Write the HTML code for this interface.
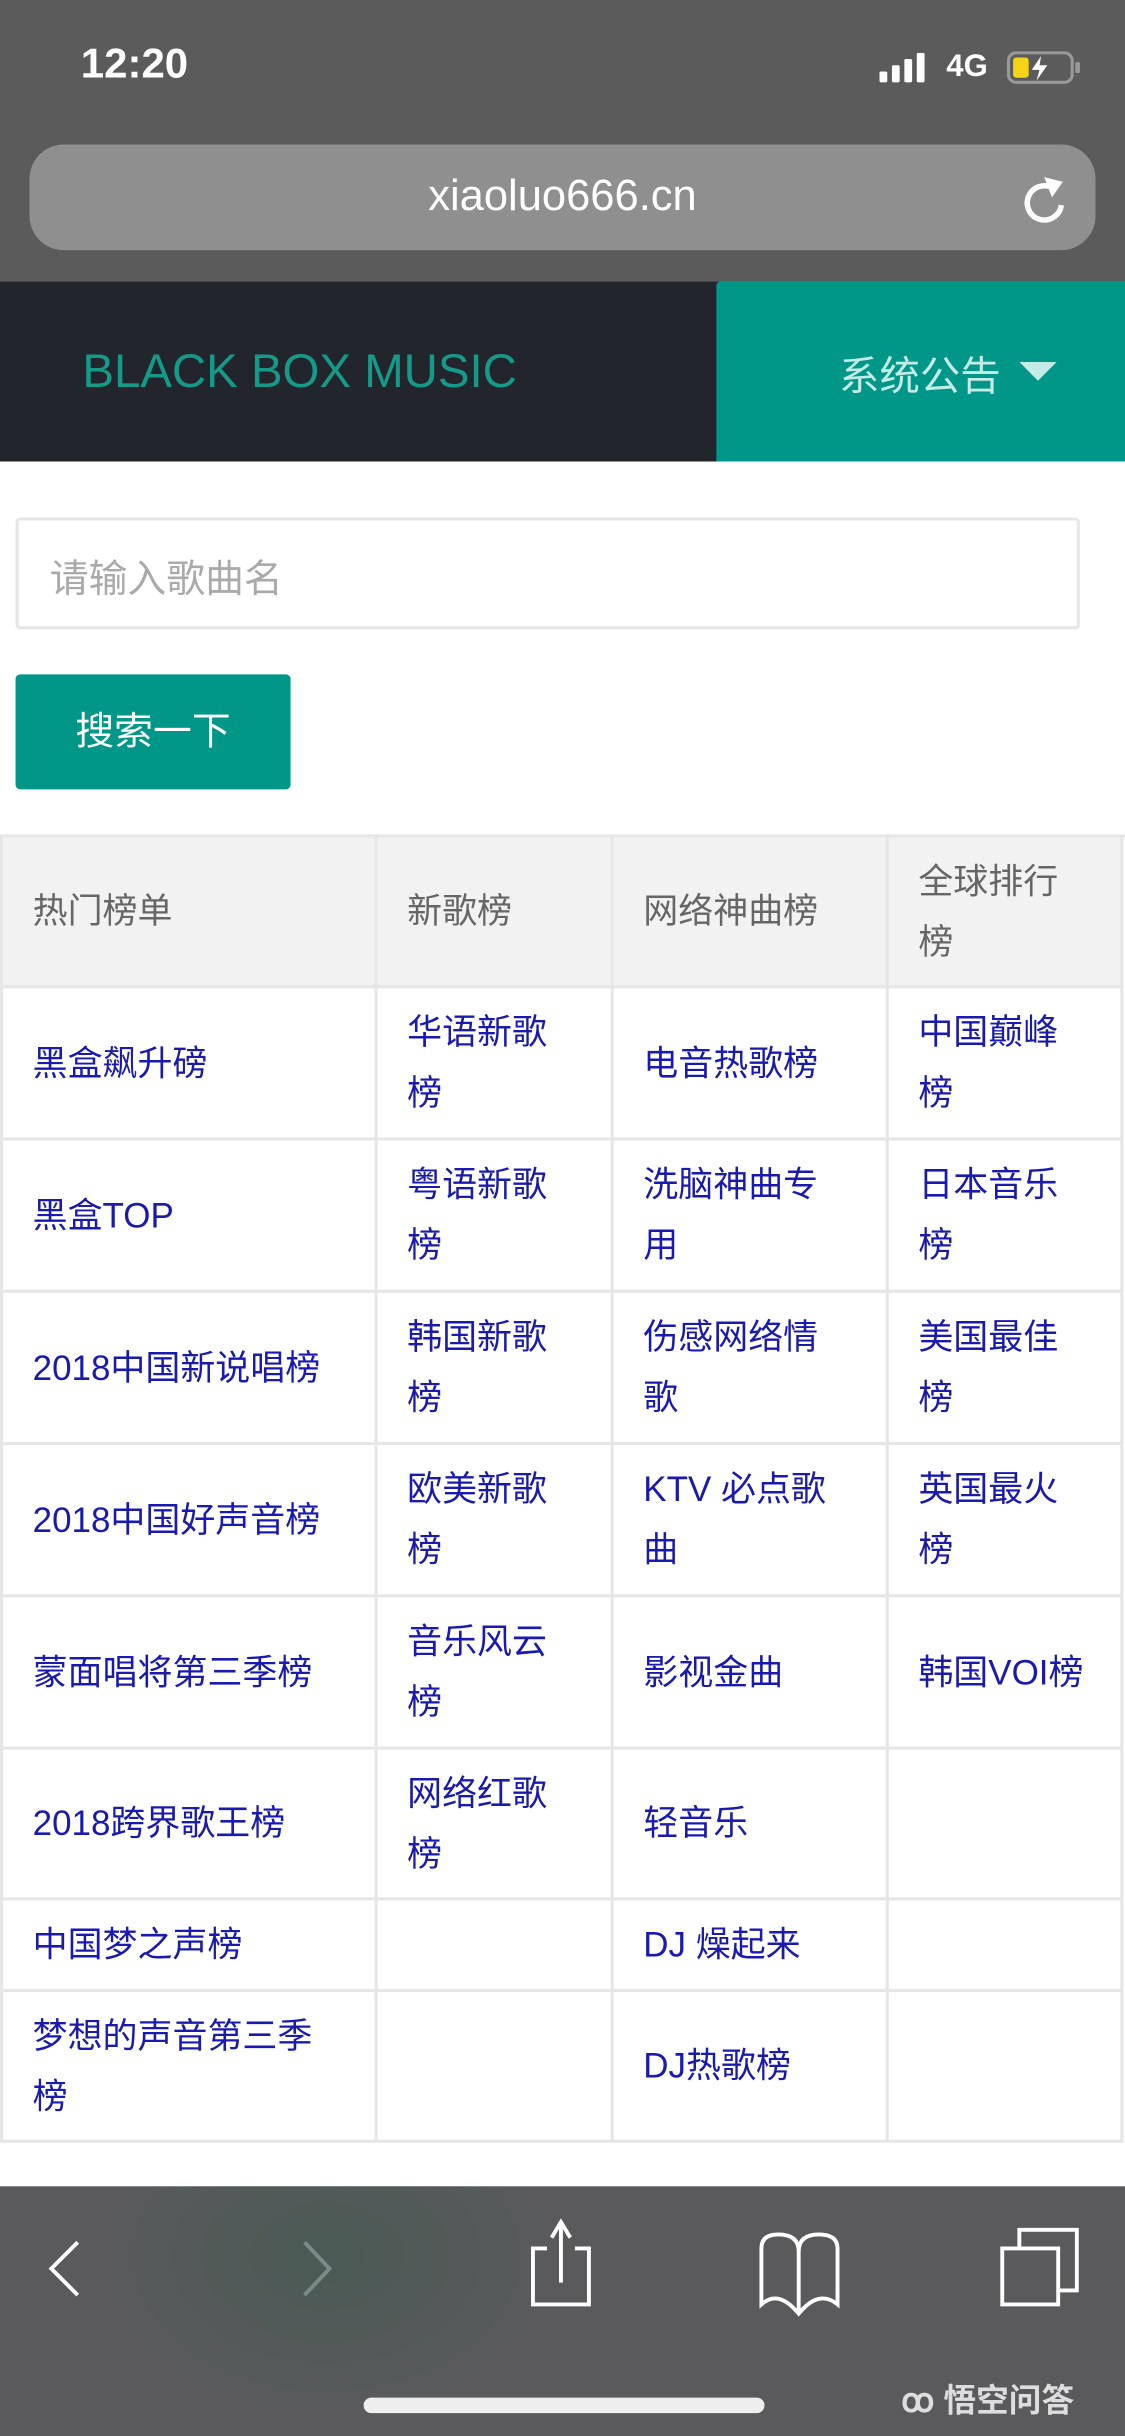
<!DOCTYPE html>
<html><head><meta charset="utf-8"><style>
*{margin:0;padding:0;box-sizing:border-box}
html,body{width:1125px;height:2436px;overflow:hidden;background:#fff}
#w{position:absolute;left:0;top:0;width:724px;height:1568px;transform:scale(1.55387);transform-origin:0 0;font-family:"Liberation Sans","Noto Sans CJK SC",sans-serif}
.a{position:absolute}
.c{position:absolute;display:flex;align-items:center;padding-left:19px;font-size:22.5px;line-height:39px;color:#1a1aae;white-space:nowrap;border-right:2px solid #e6e6e6;border-bottom:2px solid #e6e6e6}
.h{background:#f2f2f2;color:#666}
</style></head><body><div id="w">
<div class="a" style="left:0;top:0;width:724px;height:181px;background:#5b5b5b"></div>
<div class="a" style="left:52px;top:26px;color:#fff;font-size:27px;font-weight:bold;">12:20</div>
<svg class="a" style="left:566px;top:34px" width="36" height="20"><rect x="0" y="12" width="5" height="7" rx="1" fill="#fff"/><rect x="8" y="8" width="5" height="11" rx="1" fill="#fff"/><rect x="16" y="4" width="5" height="15" rx="1" fill="#fff"/><rect x="24" y="0" width="5" height="19" rx="1" fill="#fff"/></svg>
<div class="a" style="left:609px;top:32px;color:#fff;font-size:20px;font-weight:bold">4G</div>
<svg class="a" style="left:648px;top:33px" width="48" height="22"><rect x="1" y="1" width="41" height="19" rx="5" fill="none" stroke="#999" stroke-width="2"/><rect x="4" y="4" width="10" height="13" rx="2" fill="#f5d415"/><rect x="44" y="7" width="3" height="7" rx="1" fill="#999"/><path d="M22 3 L16 12 H21 L19 19 L26 9 H21 Z" fill="#fff"/></svg>
<div class="a" style="left:19px;top:93px;width:686px;height:68px;background:#8f8f8f;border-radius:22px"></div>
<div class="a" style="left:0;top:110px;width:724px;text-align:center;color:#fff;font-size:28px">xiaoluo666.cn</div>
<svg class="a" style="left:655px;top:108px" width="36" height="40"><path d="M24 14 A11 11 0 1 0 28 24" fill="none" stroke="#fff" stroke-width="3.5"/><path d="M17 6 L29 9 L22 19 Z" fill="#fff"/></svg>
<div class="a" style="left:0;top:181px;width:724px;height:116px;background:#23252c"></div>
<div class="a" style="left:461px;top:181px;width:263px;height:116px;background:#009688;border-radius:3px 0 0 0"></div>
<div class="a" style="left:53px;top:222px;color:#159a8a;font-size:30.5px">BLACK BOX MUSIC</div>
<div class="a" style="left:540px;top:222px;color:#c4ece7;font-size:26px">系统公告</div>
<svg class="a" style="left:656px;top:233px" width="24" height="14"><path d="M0 0 H24 L12 12 Z" fill="#c4ece7"/></svg>
<div class="a" style="left:10px;top:333px;width:685px;height:72px;border:2px solid #e6e6e6;border-radius:3px"></div>
<div class="a" style="left:32px;top:353px;color:#aaa;font-size:25px">请输入歌曲名</div>
<div class="a" style="left:10px;top:434px;width:177px;height:74px;background:#009688;border-radius:3px;color:#fff;font-size:25px;text-align:center;line-height:74px">搜索一下</div>
<div class="a" style="left:0;top:537px;width:724px;height:2px;background:#e6e6e6"></div>
<div class="a" style="left:0;top:537px;width:2px;height:842px;background:#e6e6e6"></div>

<div class="c h" style="left:2px;top:539px;width:241px;height:97px">热门榜单</div>
<div class="c h" style="left:243px;top:539px;width:152px;height:97px">新歌榜</div>
<div class="c h" style="left:395px;top:539px;width:177px;height:97px">网络神曲榜</div>
<div class="c h" style="left:572px;top:539px;width:151px;height:97px">全球排行<br>榜</div>

<div class="c" style="left:2px;top:636px;width:241px;height:98px">黑盒飙升磅</div>
<div class="c" style="left:243px;top:636px;width:152px;height:98px">华语新歌<br>榜</div>
<div class="c" style="left:395px;top:636px;width:177px;height:98px">电音热歌榜</div>
<div class="c" style="left:572px;top:636px;width:151px;height:98px">中国巅峰<br>榜</div>

<div class="c" style="left:2px;top:734px;width:241px;height:98px">黑盒TOP</div>
<div class="c" style="left:243px;top:734px;width:152px;height:98px">粤语新歌<br>榜</div>
<div class="c" style="left:395px;top:734px;width:177px;height:98px">洗脑神曲专<br>用</div>
<div class="c" style="left:572px;top:734px;width:151px;height:98px">日本音乐<br>榜</div>

<div class="c" style="left:2px;top:832px;width:241px;height:98px">2018中国新说唱榜</div>
<div class="c" style="left:243px;top:832px;width:152px;height:98px">韩国新歌<br>榜</div>
<div class="c" style="left:395px;top:832px;width:177px;height:98px">伤感网络情<br>歌</div>
<div class="c" style="left:572px;top:832px;width:151px;height:98px">美国最佳<br>榜</div>

<div class="c" style="left:2px;top:930px;width:241px;height:98px">2018中国好声音榜</div>
<div class="c" style="left:243px;top:930px;width:152px;height:98px">欧美新歌<br>榜</div>
<div class="c" style="left:395px;top:930px;width:177px;height:98px">KTV 必点歌<br>曲</div>
<div class="c" style="left:572px;top:930px;width:151px;height:98px">英国最火<br>榜</div>

<div class="c" style="left:2px;top:1028px;width:241px;height:98px">蒙面唱将第三季榜</div>
<div class="c" style="left:243px;top:1028px;width:152px;height:98px">音乐风云<br>榜</div>
<div class="c" style="left:395px;top:1028px;width:177px;height:98px">影视金曲</div>
<div class="c" style="left:572px;top:1028px;width:151px;height:98px">韩国VOI榜</div>

<div class="c" style="left:2px;top:1126px;width:241px;height:97px">2018跨界歌王榜</div>
<div class="c" style="left:243px;top:1126px;width:152px;height:97px">网络红歌<br>榜</div>
<div class="c" style="left:395px;top:1126px;width:177px;height:97px">轻音乐</div>
<div class="c" style="left:572px;top:1126px;width:151px;height:97px"></div>

<div class="c" style="left:2px;top:1223px;width:241px;height:59px">中国梦之声榜</div>
<div class="c" style="left:243px;top:1223px;width:152px;height:59px"></div>
<div class="c" style="left:395px;top:1223px;width:177px;height:59px">DJ 燥起来</div>
<div class="c" style="left:572px;top:1223px;width:151px;height:59px"></div>

<div class="c" style="left:2px;top:1282px;width:241px;height:97px">梦想的声音第三季<br>榜</div>
<div class="c" style="left:243px;top:1282px;width:152px;height:97px"></div>
<div class="c" style="left:395px;top:1282px;width:177px;height:97px">DJ热歌榜</div>
<div class="c" style="left:572px;top:1282px;width:151px;height:97px"></div>

<div class="a" style="left:0;top:1407px;width:724px;height:161px;background:#5a5a5c"></div>
<div class="a" style="left:60px;top:1407px;width:300px;height:150px;background:radial-gradient(ellipse at 50% 30%,#4a5a55,rgba(90,90,92,0) 70%)"></div>
<svg class="a" style="left:0;top:1407px" width="724" height="161" fill="none" stroke="#fff" stroke-width="2.5">
<path d="M50 36 L33 53 L50 70"/>
<path d="M196 36 L212 53 L196 70" stroke="#7a8a86"/>
<path d="M352 40 H343 V76 H379 V40 H370"/><path d="M361 62 V24 M355 33 L361 23 L367 33"/>
<path d="M490 76 V40 Q490 31 501 31 Q514 31 514 42 Q514 31 527 31 Q539 31 539 40 V76 Q527 66 514 82 Q501 66 490 76 Z M514 42 V82"/>
<path d="M645 76 H681 V40 H645 Z"/><path d="M656 39 V28 H693 V67 H682"/>
</svg>
<div class="a" style="left:234px;top:1543px;width:258px;height:10px;border-radius:5px;background:#eee"></div>
<div class="a" style="left:580px;top:1529px;color:#ddd;font-size:21px;font-weight:bold">ꝏ 悟空问答</div>
</div></body></html>
